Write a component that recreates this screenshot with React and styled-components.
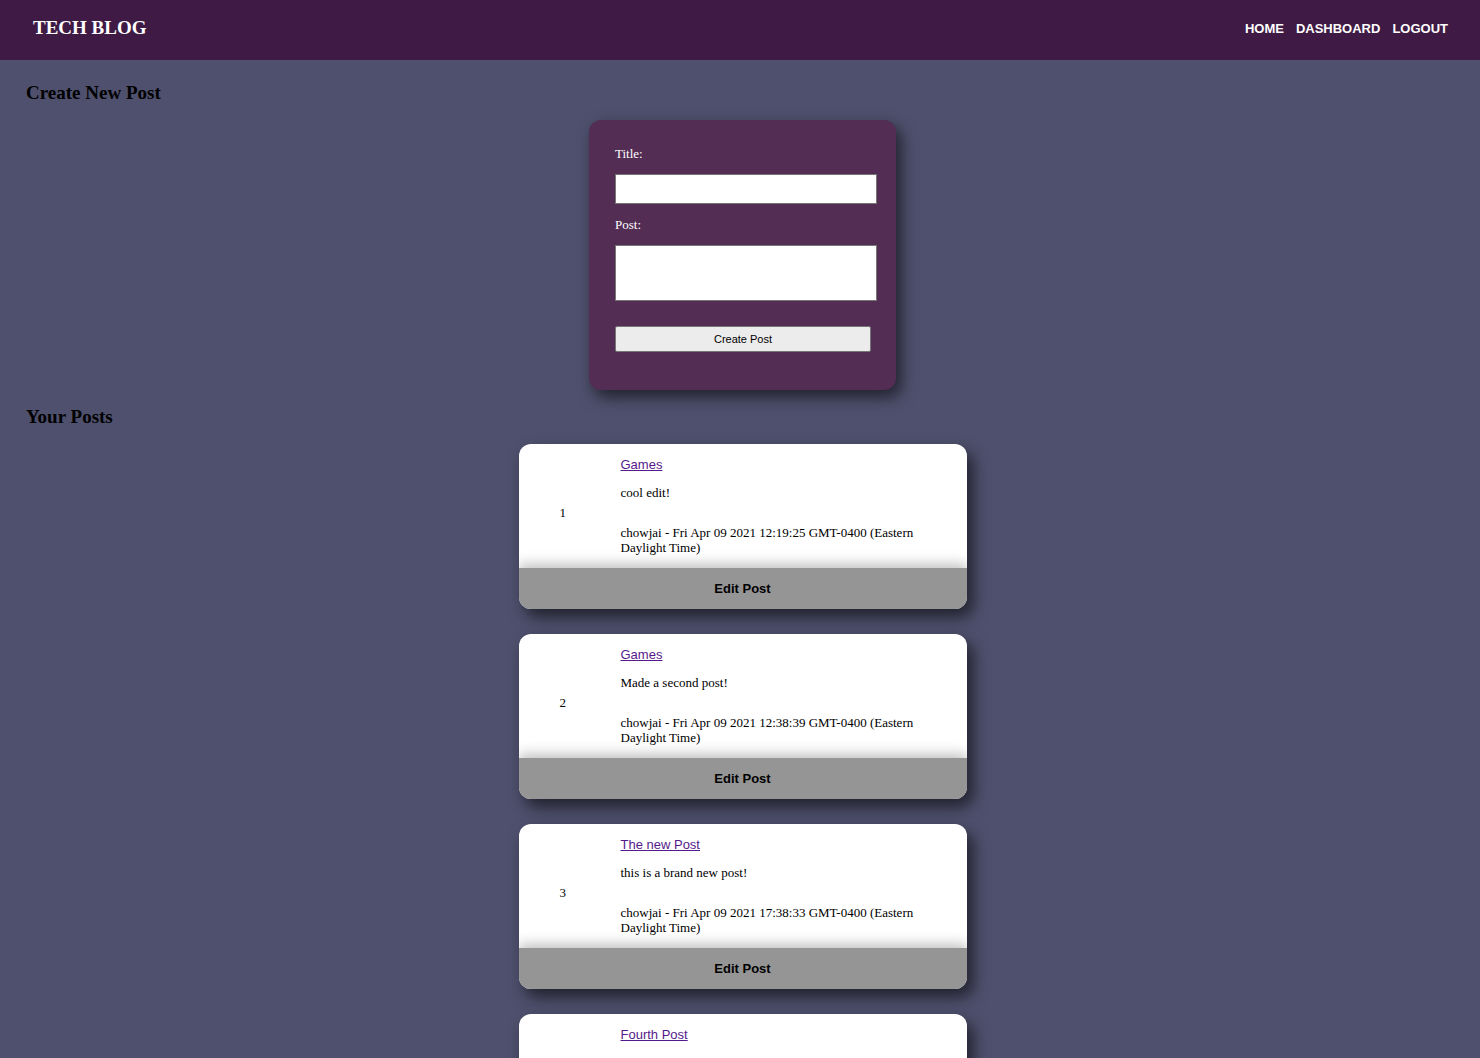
import React from "react";
import styled, { createGlobalStyle } from "styled-components";

const Global = createGlobalStyle`
  html { scrollbar-width: none; }
  html::-webkit-scrollbar { display: none; }
  body {
    margin: 0;
    background: #4f506d;
    font-family: "Liberation Serif", "Times New Roman", serif;
    font-size: 13px;
    color: #000;
  }
`;

const Header = styled.header`
  height: 60px;
  background: #3f1a44;
  display: flex;
  align-items: center;
  justify-content: space-between;
  padding: 0 32px 0 33px;
`;

const Brand = styled.h1`
  margin: 0;
  margin-top: -5px;
  font-family: "Liberation Serif", serif;
  font-size: 19px;
  font-weight: bold;
  color: #fff;
`;

const Nav = styled.nav`
  display: flex;
  gap: 12px;
  margin-top: -4px;
`;

const NavLink = styled.a`
  font-family: "Liberation Sans", Arial, sans-serif;
  font-size: 13px;
  font-weight: bold;
  color: #fff;
  text-decoration: none;
  text-transform: uppercase;
`;

const Main = styled.main`
  padding: 0 26px;
`;

const SectionTitle = styled.h3`
  margin: ${(p) => p.$top}px 0 0;
  font-size: 19px;
  font-weight: bold;
  line-height: 22px;
`;

const Center = styled.div`
  display: flex;
  flex-direction: column;
  align-items: center;
  gap: ${(p) => p.$gap || 0}px;
  padding-left: 5px;
  margin-top: ${(p) => p.$top}px;
`;

const FormCard = styled.form`
  width: 307px;
  box-sizing: border-box;
  height: 270px;
  background: #532d54;
  border-radius: 12px;
  padding: 26px 19px 0 26px;
  box-shadow: 5px 7px 16px rgba(0, 0, 0, 0.6);
  display: flex;
  flex-direction: column;
`;

const Label = styled.label`
  color: #fff;
  font-size: 13px;
  line-height: 15px;
`;

const TextInput = styled.input`
  margin-top: 13px;
  width: 262px;
  height: 30px;
  box-sizing: border-box;
  border: 1px solid #767676;
  background: #fff;
  margin-bottom: 13px;
  padding: 0;
`;

const TextArea = styled.textarea`
  margin-top: 13px;
  width: 262px;
  height: 56px;
  box-sizing: border-box;
  border: 1px solid #767676;
  background: #fff;
  resize: none;
  padding: 0;
`;

const SubmitButton = styled.button`
  margin-top: 25px;
  width: 256px;
  height: 26px;
  box-sizing: border-box;
  border: 1px solid #767676;
  border-radius: 2px;
  background: #ececec;
  font-family: "Liberation Sans", Arial, sans-serif;
  font-size: 11px;
  color: #000;
  padding: 0;
`;

const PostCard = styled.article`
  width: 448px;
  background: #fff;
  border-radius: 12px;
  overflow: hidden;
  box-shadow: 6px 8px 16px rgba(0, 0, 0, 0.6);
  display: flex;
  flex-direction: column;
`;

const PostBody = styled.div`
  display: flex;
  align-items: center;
`;

const PostNumber = styled.div`
  padding-left: 41px;
  padding-top: 12px;
  box-sizing: border-box;
  width: 102px;
  line-height: 15px;
`;

const PostContent = styled.div`
  width: 300px;
  padding: 13px 0;
  line-height: 15px;
`;

const PostLink = styled.a`
  display: block;
  font-family: "Liberation Sans", Arial, sans-serif;
  font-size: 13px;
  color: #551a8b;
  text-decoration: underline;
  width: fit-content;
`;

const PostText = styled.p`
  margin: 13px 0 0;
`;

const PostMeta = styled.p`
  margin: 25px 0 0;
`;

const EditButton = styled.button`
  display: block;
  height: 41px;
  width: 100%;
  border: none;
  background: #959595;
  font-family: "Liberation Sans", Arial, sans-serif;
  font-size: 13px;
  font-weight: bold;
  color: #000;
  box-shadow: 0 -4px 12px rgba(0, 0, 0, 0.25);
  position: relative;
`;

const posts = [
  { id: 1, title: "Games", body: "cool edit!", date: "Fri Apr 09 2021 12:19:25 GMT-0400 (Eastern Daylight Time)" },
  { id: 2, title: "Games", body: "Made a second post!", date: "Fri Apr 09 2021 12:38:39 GMT-0400 (Eastern Daylight Time)" },
  { id: 3, title: "The new Post", body: "this is a brand new post!", date: "Fri Apr 09 2021 17:38:33 GMT-0400 (Eastern Daylight Time)" },
  { id: 4, title: "Fourth Post", body: "yet another post!", date: "Fri Apr 09 2021 18:02:11 GMT-0400 (Eastern Daylight Time)" },
];

export default function App() {
  return (
    <>
      <Global />
      <Header>
        <Brand>TECH BLOG</Brand>
        <Nav>
          <NavLink href="#">Home</NavLink>
          <NavLink href="#">Dashboard</NavLink>
          <NavLink href="#">Logout</NavLink>
        </Nav>
      </Header>
      <Main>
        <SectionTitle $top={22}>Create New Post</SectionTitle>
        <Center $top={16}>
          <FormCard onSubmit={(e) => e.preventDefault()}>
            <Label htmlFor="title">Title:</Label>
            <TextInput id="title" type="text" />
            <Label htmlFor="post">Post:</Label>
            <TextArea id="post" />
            <SubmitButton type="submit">Create Post</SubmitButton>
          </FormCard>
        </Center>
        <SectionTitle $top={16}>Your Posts</SectionTitle>
        <Center $top={16} $gap={25}>
          {posts.map((p) => (
            <PostCard key={p.id}>
              <PostBody>
                <PostNumber>{p.id}</PostNumber>
                <PostContent>
                  <PostLink href="#">{p.title}</PostLink>
                  <PostText>{p.body}</PostText>
                  <PostMeta>chowjai - {p.date}</PostMeta>
                </PostContent>
              </PostBody>
              <EditButton>Edit Post</EditButton>
            </PostCard>
          ))}
        </Center>
      </Main>
    </>
  );
}
